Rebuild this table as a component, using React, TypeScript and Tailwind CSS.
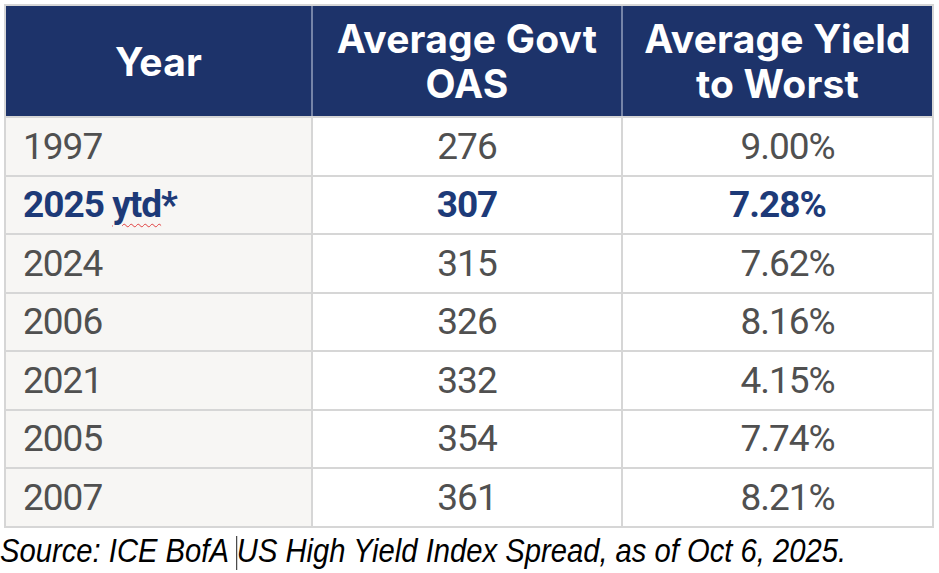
const rows = [
  { year: "1997", oas: "276", ytw: "9.00%" },
  { year: "2025 ytd*", oas: "307", ytw: "7.28%", highlight: true },
  { year: "2024", oas: "315", ytw: "7.62%" },
  { year: "2006", oas: "326", ytw: "8.16%" },
  { year: "2021", oas: "332", ytw: "4.15%" },
  { year: "2005", oas: "354", ytw: "7.74%" },
  { year: "2007", oas: "361", ytw: "8.21%" },
];

export default function App() {
  return (
    <div className="h-[573px] w-[939px] overflow-hidden bg-white pt-[4px]">
      <div className="ml-[4px] w-[930px] border-2 border-[#d6d6d6] font-['Roboto',sans-serif]">
        <div className="grid h-[110px] grid-cols-[307px_310px_309px] bg-[#1d336a] text-center font-['Inter',sans-serif] text-[39px] font-bold leading-[45px] tracking-[0.2px] text-white">
          <div className="flex items-center justify-center border-r-2 border-[#7584a8]">Year</div>
          <div className="flex items-center justify-center border-r-2 border-[#7584a8]">
            Average Govt
            <br />
            OAS
          </div>
          <div className="flex items-center justify-center">
            Average Yield
            <br />
            to Worst
          </div>
        </div>
        {rows.map((r) => (
          <div
            key={r.year}
            className={`grid h-[58.5px] grid-cols-[307px_310px_309px] border-t-2 border-[#d6d6d6] text-[37px] tracking-[-1px] ${
              r.highlight ? "font-bold text-[#1d3a78]" : "text-[#505050]"
            }`}
          >
            <div className="flex items-center border-r-2 border-[#d6d6d6] bg-[#f7f6f4] pl-[17px]">
              {r.highlight ? (
                <span>
                  2025{" "}
                  <span className="underline decoration-[#e04040] decoration-wavy decoration-1 underline-offset-[6px]">ytd</span>*
                </span>
              ) : (
                r.year
              )}
            </div>
            <div className="flex items-center justify-center border-r-2 border-[#d6d6d6] bg-white">{r.oas}</div>
            <div className={`flex items-center justify-center bg-white ${r.highlight ? "" : "pl-[20px]"}`}>{r.ytw}</div>
          </div>
        ))}
      </div>
      <p className="mt-[5px] origin-left scale-x-[0.885] whitespace-nowrap font-['Liberation_Sans',sans-serif] text-[33px] italic leading-[36px] text-black">
        Source: ICE BofA <span className="inline-block h-[34px] w-px bg-black align-middle" />US High Yield Index Spread, as of Oct 6, 2025.
      </p>
    </div>
  );
}
